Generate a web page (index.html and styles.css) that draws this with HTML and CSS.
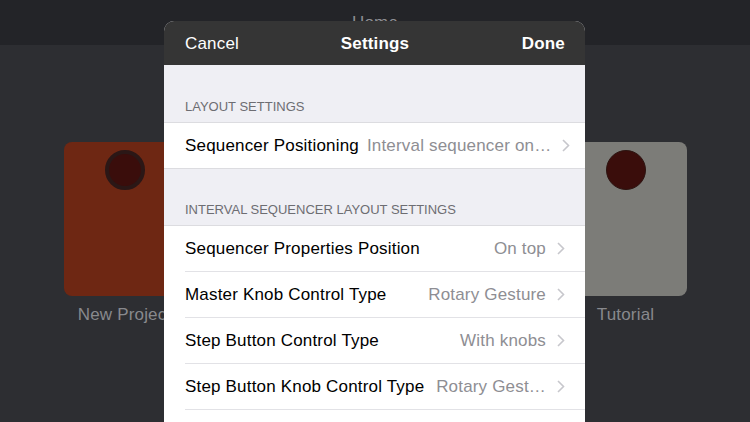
FILE: index.html
```html
<!DOCTYPE html>
<html lang="en">

<head>
    <meta charset="UTF-8">
    <meta name="viewport" content="width=device-width, initial-scale=1.0">
    <title>Settings</title>
    <link rel="stylesheet" href="styles.css">
</head>

<body>
    <div class="topbar">Home</div>
    <div class="projects">
        <div class="project">
            <div class="card card-new"><span class="knob knob-ring"></span></div>
            <span class="label">New Project</span>
        </div>
        <div class="project">
            <div class="card card-demo"><span class="knob"></span></div>
            <span class="label">Demo</span>
        </div>
        <div class="project">
            <div class="card card-tutorial"><span class="knob"></span></div>
            <span class="label">Tutorial</span>
        </div>
    </div>

    <div class="modal">
        <div class="modal-head">
            <a href="javascript:;" class="cancel">Cancel</a>
            <span class="title">Settings</span>
            <a href="javascript:;" class="done">Done</a>
        </div>
        <div class="section-title">LAYOUT SETTINGS</div>
        <ul class="group">
            <li class="row">
                <span class="name">Sequencer Positioning</span>
                <span class="value">Interval sequencer on…</span>
                <svg class="chevron" width="8" height="13" viewBox="0 0 8 13"><path d="M1 1 L6.5 6.5 L1 12" /></svg>
            </li>
        </ul>
        <div class="section-title">INTERVAL SEQUENCER LAYOUT SETTINGS</div>
        <ul class="group">
            <li class="row">
                <span class="name">Sequencer Properties Position</span>
                <span class="value">On top</span>
                <svg class="chevron" width="8" height="13" viewBox="0 0 8 13"><path d="M1 1 L6.5 6.5 L1 12" /></svg>
            </li>
            <li class="row">
                <span class="name">Master Knob Control Type</span>
                <span class="value">Rotary Gesture</span>
                <svg class="chevron" width="8" height="13" viewBox="0 0 8 13"><path d="M1 1 L6.5 6.5 L1 12" /></svg>
            </li>
            <li class="row">
                <span class="name">Step Button Control Type</span>
                <span class="value">With knobs</span>
                <svg class="chevron" width="8" height="13" viewBox="0 0 8 13"><path d="M1 1 L6.5 6.5 L1 12" /></svg>
            </li>
            <li class="row">
                <span class="name">Step Button Knob Control Type</span>
                <span class="value">Rotary Gest…</span>
                <svg class="chevron" width="8" height="13" viewBox="0 0 8 13"><path d="M1 1 L6.5 6.5 L1 12" /></svg>
            </li>
            <li class="row"></li>
        </ul>
    </div>
</body>

</html>
```

FILE: styles.css
```css
html, body {
    margin: 0;
    height: 100%;
    overflow: hidden;
}
body {
    position: relative;
    background: #2d2e32;
    font-family: "Liberation Sans", Arial, sans-serif;
    font-size: 17px;
    letter-spacing: 0.18px;
}
.topbar {
    height: 45px;
    line-height: 46px;
    background: #232428;
    color: #8e8e93;
    text-align: center;
}
.projects {
    display: grid;
    grid-template-columns: repeat(3, 122px);
    column-gap: 128.5px;
    justify-content: center;
    padding-top: 97px;
}
.project {
    display: flex;
    flex-direction: column;
    align-items: center;
}
.card {
    width: 100%;
    height: 154px;
    border-radius: 8px;
    display: flex;
    justify-content: center;
    padding-top: 8px;
    box-sizing: border-box;
}
.card-new {
    background: #6e2713;
}
.card-demo {
    background: #3d5a6e;
}
.card-tutorial {
    background: #7c7c78;
}
.knob {
    width: 40px;
    height: 40px;
    border-radius: 50%;
    background: #3a0d0b;
    box-sizing: border-box;
    border: 1px solid #2c1411;
}
.knob-ring {
    border: 4px solid #2b1716;
}
.label {
    margin-top: 9px;
    line-height: 20px;
    color: #88898d;
}

.modal {
    position: absolute;
    left: 164px;
    top: 21px;
    width: 421px;
    bottom: -40px;
    border-radius: 10px 10px 0 0;
    overflow: hidden;
    background: #efeff4;
}
.modal-head {
    height: 44px;
    background: #353535;
    color: #fff;
    display: grid;
    grid-template-columns: 1fr auto 1fr;
    align-items: center;
    padding: 1px 20px 0 21px;
    box-sizing: border-box;
}
.modal-head a {
    color: #fff;
    text-decoration: none;
}
.modal-head .title {
    font-weight: bold;
}
.modal-head .done {
    font-weight: bold;
    justify-self: end;
}
.section-title {
    height: 57px;
    box-sizing: border-box;
    display: flex;
    align-items: flex-end;
    padding: 0 21px 7px;
    font-size: 13px;
    line-height: 16px;
    letter-spacing: 0;
    color: #6d6d72;
}
.group + .section-title {
    height: 56px;
}
.group {
    list-style: none;
    margin: 0;
    padding: 0;
    background: #fff;
    border-top: 1px solid #dcdce0;
    border-bottom: 1px solid #dcdce0;
}
.row {
    height: 45px;
    margin-left: 21px;
    padding-right: 20px;
    display: flex;
    align-items: center;
    border-bottom: 1px solid #e2e2e6;
}
.row:last-child {
    border-bottom: 0;
}
.row .name {
    color: #000;
    white-space: nowrap;
}
.row .value {
    margin-left: auto;
    padding-left: 8px;
    color: #8e8e93;
    white-space: nowrap;
}
.chevron {
    margin-left: 11px;
    flex-shrink: 0;
}
.chevron path {
    fill: none;
    stroke: #c7c7cc;
    stroke-width: 1.6;
}
```
